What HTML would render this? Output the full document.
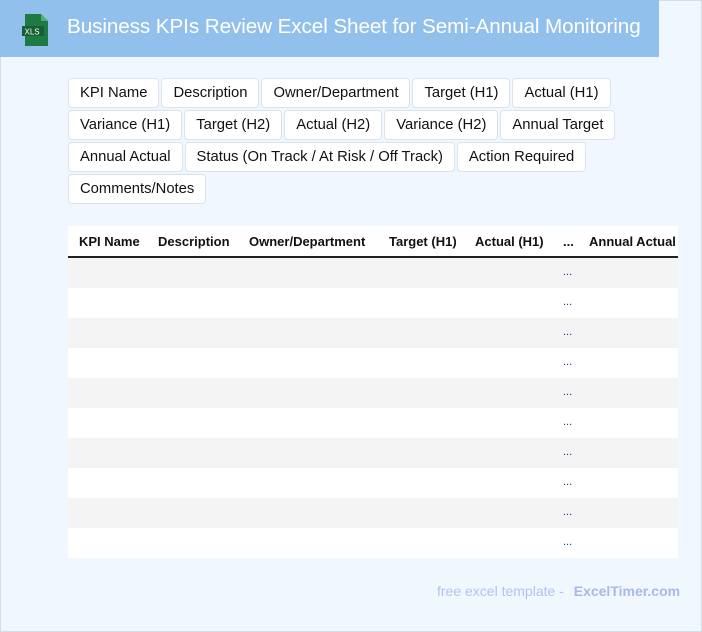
<!DOCTYPE html>
<html><head><style>
*{margin:0;padding:0;box-sizing:border-box}
body{width:702px;height:632px;background:#f0f7ff;font-family:"Liberation Sans",sans-serif;position:relative;overflow:hidden;border:1px solid #d5dde6}
.hdr{position:absolute;left:-1px;top:-1px;width:659px;height:57px;background:#92c0ec}
.hdr h1{position:absolute;left:67px;top:15px;font-size:20.7px;font-weight:normal;color:#fff;white-space:nowrap;letter-spacing:-0.1px}
.chips{position:absolute;left:67px;top:77px;width:560px;display:flex;flex-wrap:wrap;gap:2px}
.chip{height:30px;padding:0 11px;background:#fff;border:1px solid #dbe3ec;border-radius:4px;font-size:14.8px;line-height:28px;color:#111;white-space:nowrap}
.tbl{position:absolute;left:67px;top:225px;width:610px;background:#fff}
.th{height:32px;border-bottom:2px solid #222;position:relative;font-size:13px;font-weight:bold;color:#111}
.th span{position:absolute;top:8px;white-space:nowrap}
.row{height:30px;position:relative}
.row:nth-child(odd){background:#f4f4f4}
.row span{position:absolute;left:495px;top:8px;font-size:11px;color:#1a3a8a}
.foot{position:absolute;left:436px;top:582px;font-size:14px;color:#b3c3ee}
.foot b{margin-left:6px;color:#a8b8ea}
</style></head><body>
<div class="hdr">
<svg style="position:absolute;left:22px;top:14px" width="28" height="32" viewBox="0 0 28 32"><path d="M3 0h16l7 7v25H3z" fill="#1d7a43"/><path d="M19 0l7 7h-7z" fill="#4fae73"/><rect x="0" y="12" width="22" height="10" fill="#155f33"/><text x="2.5" y="20.5" font-size="8" fill="#fff" font-family="Liberation Sans">XLS</text></svg>
<h1>Business KPIs Review Excel Sheet for Semi-Annual Monitoring</h1></div>
<div class="chips">
<div class="chip">KPI Name</div><div class="chip">Description</div><div class="chip">Owner/Department</div><div class="chip">Target (H1)</div><div class="chip">Actual (H1)</div>
<div class="chip">Variance (H1)</div><div class="chip">Target (H2)</div><div class="chip">Actual (H2)</div><div class="chip">Variance (H2)</div><div class="chip">Annual Target</div>
<div class="chip">Annual Actual</div><div class="chip">Status (On Track / At Risk / Off Track)</div><div class="chip">Action Required</div>
<div class="chip">Comments/Notes</div>
</div>
<div class="tbl">
<div class="th"><span style="left:11px">KPI Name</span><span style="left:90px">Description</span><span style="left:181px">Owner/Department</span><span style="left:321px">Target (H1)</span><span style="left:407px">Actual (H1)</span><span style="left:495px">...</span><span style="left:521px;width:89px;overflow:hidden">Annual Actual</span></div>
<div>
<div class="row"><span>...</span></div><div class="row"><span>...</span></div><div class="row"><span>...</span></div><div class="row"><span>...</span></div><div class="row"><span>...</span></div><div class="row"><span>...</span></div><div class="row"><span>...</span></div><div class="row"><span>...</span></div><div class="row"><span>...</span></div><div class="row"><span>...</span></div>
</div></div>
<div class="foot">free excel template - <b>ExcelTimer.com</b></div>
</body></html>
